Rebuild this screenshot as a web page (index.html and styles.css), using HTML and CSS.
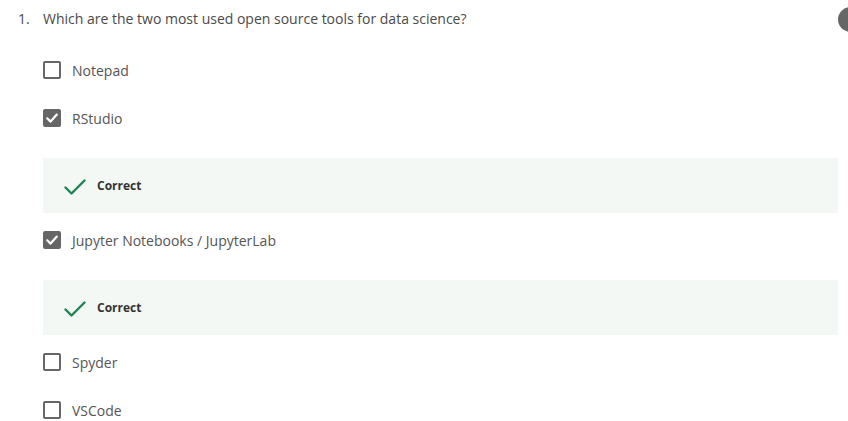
FILE: index.html
```html
<!DOCTYPE html>
<html>
<head>
<meta charset="utf-8">
<link rel="stylesheet" href="styles.css">
</head>
<body>
<div class="page">
  <div class="question">
    <span class="num">1.</span>
    <span class="qtext">Which are the two most used open source tools for data science?</span>
  </div>
  <div class="avatar"></div>
  <div class="options">
    <div class="option">
      <span class="box"></span><span class="label">Notepad</span>
    </div>
    <div class="option">
      <span class="box checked"><svg viewBox="0 0 18 18" width="18" height="18"><path d="M4.2 9.3 L7.6 12.6 L13.8 5.6" fill="none" stroke="#fff" stroke-width="2.2" stroke-linecap="round" stroke-linejoin="round"/></svg></span><span class="label">RStudio</span>
    </div>
    <div class="feedback">
      <svg class="tick" viewBox="0 0 22 16" width="22" height="16"><path d="M1.5 8.5 L7.5 14.5 L20.5 1.5" fill="none" stroke="#1f8354" stroke-width="2.4" stroke-linecap="round" stroke-linejoin="round"/></svg>
      <span class="ftext">Correct</span>
    </div>
    <div class="option">
      <span class="box checked"><svg viewBox="0 0 18 18" width="18" height="18"><path d="M4.2 9.3 L7.6 12.6 L13.8 5.6" fill="none" stroke="#fff" stroke-width="2.2" stroke-linecap="round" stroke-linejoin="round"/></svg></span><span class="label">Jupyter Notebooks / JupyterLab</span>
    </div>
    <div class="feedback">
      <svg class="tick" viewBox="0 0 22 16" width="22" height="16"><path d="M1.5 8.5 L7.5 14.5 L20.5 1.5" fill="none" stroke="#1f8354" stroke-width="2.4" stroke-linecap="round" stroke-linejoin="round"/></svg>
      <span class="ftext">Correct</span>
    </div>
    <div class="option">
      <span class="box"></span><span class="label">Spyder</span>
    </div>
    <div class="option last">
      <span class="box"></span><span class="label">VSCode</span>
    </div>
  </div>
</div>
</body>
</html>
```
FILE: styles.css
```css
html, body {
  margin: 0;
  padding: 0;
  background: #fff;
}
body {
  font-family: "Open Sans", "Liberation Sans", sans-serif;
  color: #4a4a4a;
  overflow: hidden;
  width: 848px;
  height: 421px;
}
.page {
  position: relative;
  padding: 9px 0 0 0;
}
.question {
  display: flex;
  font-size: 14px;
  line-height: 20px;
  height: 20px;
  color: #4a4a4a;
}
.num {
  width: 25px;
  padding-left: 18px;
}
.avatar {
  position: absolute;
  left: 838px;
  top: 7px;
  width: 25px;
  height: 25px;
  border-radius: 50%;
  background: #666;
}
.options {
  display: flex;
  flex-direction: column;
  padding-left: 43px;
  padding-right: 10px;
  margin-top: 31px;
}
.option {
  display: flex;
  align-items: center;
  height: 20px;
  margin-bottom: 28px;
  font-size: 14px;
  color: #555;
}
.option.last {
  margin-bottom: 0;
}
.box {
  box-sizing: border-box;
  width: 18px;
  height: 18px;
  border: 2px solid #666;
  border-radius: 2px;
  margin-right: 11px;
  display: flex;
  align-items: center;
  justify-content: center;
}
.box.checked {
  background: #666;
  border-color: #666;
}
.box.checked svg {
  flex: none;
}
.feedback {
  display: flex;
  align-items: center;
  height: 55px;
  margin-top: 2px;
  margin-bottom: 17px;
  background: #f3f8f5;
  padding-left: 21px;
}
.tick {
  margin-right: 11px;
  margin-top: 2px;
}
.ftext {
  font-size: 12px;
  font-weight: 700;
  color: #333;
}
```
